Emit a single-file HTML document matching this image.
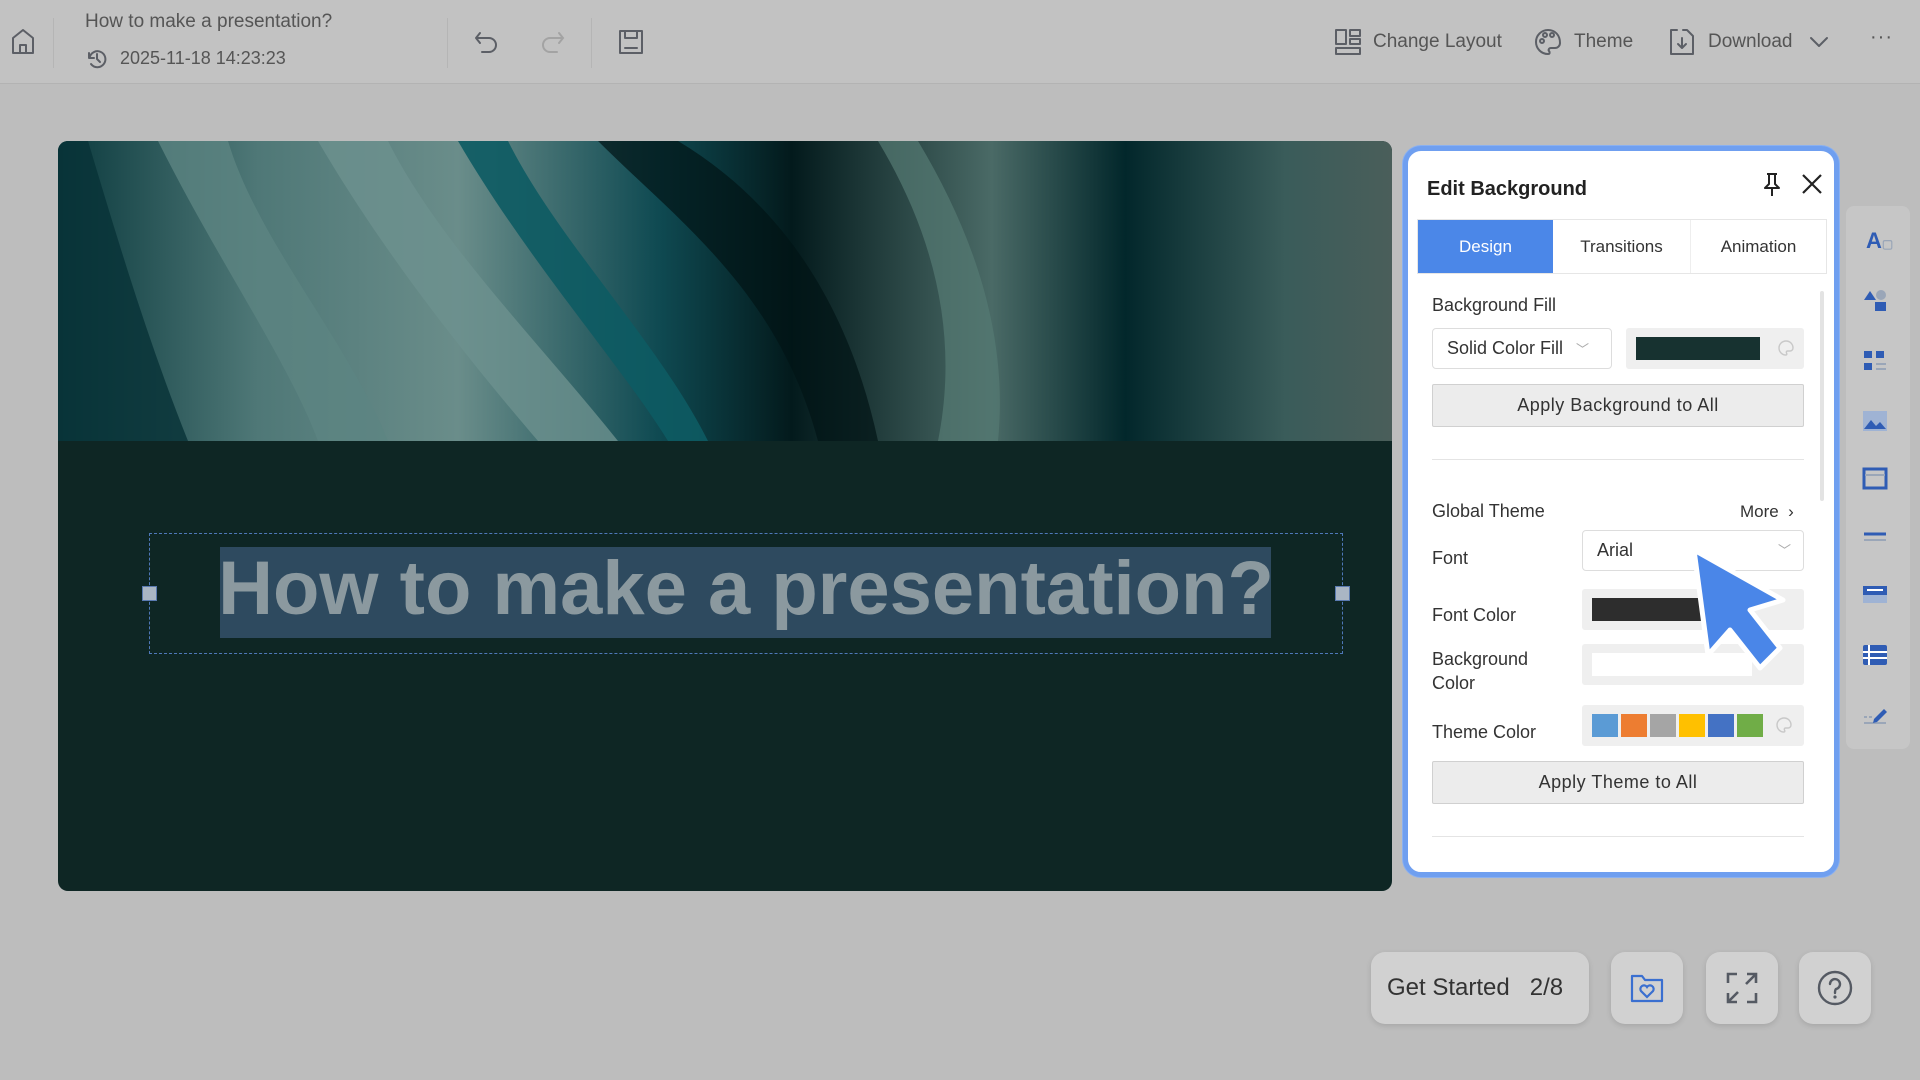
<!DOCTYPE html>
<html><head><meta charset="utf-8"><style>
*{box-sizing:border-box;margin:0;padding:0}
body{width:1920px;height:1080px;background:#bdbdbd;font-family:"Liberation Sans","DejaVu Sans",sans-serif;position:relative;overflow:hidden;color:#333}
.a{position:absolute}
.top{left:0;top:0;width:1920px;height:84px;background:#c2c2c2;border-bottom:1px solid #b3b3b3}
.vd{width:1px;background:#b5b5b5;top:18px;height:50px}
.ttxt{font-size:19px;color:#555}
.ic{stroke:#5c5f66;fill:none;stroke-width:2;stroke-linecap:round;stroke-linejoin:round}
.p{font-size:18px;color:#333}
.btn{background:#ececec;border:1px solid #d0d0d0;text-align:center;font-size:18px;color:#333;letter-spacing:.5px;border-radius:2px}
.sw{background:#efefef;border-radius:3px}
.tb svg{position:absolute;left:16px}
.bb{background:#d1d1d1;border-radius:14px;box-shadow:0 2px 6px rgba(0,0,0,.12)}
.pal{position:absolute;top:11px}
</style></head><body>
<div class="a top"></div>
<svg class="a" style="left:8px;top:26px" width="30" height="30" viewBox="0 0 30 30"><path class="ic" d="M5 27V12L15 4l10 8v15z M12 27v-8h6v8"/></svg>
<div class="a vd" style="left:53px"></div>
<div class="a ttxt" style="left:85px;top:11px">How to make a presentation?</div>
<svg class="a" style="left:85px;top:47px" width="24" height="24" viewBox="0 0 24 24"><path class="ic" d="M4 6v5h5 M4.5 11A8 8 0 1 1 6 17 M12 7v5l3 3"/></svg>
<div class="a ttxt" style="left:120px;top:48px;font-size:18px">2025-11-18 14:23:23</div>
<div class="a vd" style="left:447px"></div>
<svg class="a" style="left:471px;top:26px" width="32" height="32" viewBox="0 0 32 32"><path class="ic" d="M9 7L5 12l4 5 M5 12h13a7 7 0 0 1 0 14h-7"/></svg>
<svg class="a" style="left:536px;top:26px" width="32" height="32" viewBox="0 0 32 32"><path d="M23 7l4 5-4 5 M27 12H14a7 7 0 0 0 0 14h7" fill="none" stroke="#a3a3a3" stroke-width="2" stroke-linecap="round"/></svg>
<div class="a vd" style="left:591px"></div>
<svg class="a" style="left:615px;top:26px" width="32" height="32" viewBox="0 0 32 32"><path class="ic" d="M5 5h22v22H5z M10 5v7h12V5 M10 22h12"/></svg>
<svg class="a" style="left:1333px;top:27px" width="30" height="30" viewBox="0 0 30 30"><path class="ic" d="M3 3h10v14H3z M17 3h10v6H17z M17 12h10v5H17z M3 21h24v6H3z"/></svg>
<div class="a ttxt" style="left:1373px;top:31px">Change Layout</div>
<svg class="a" style="left:1533px;top:27px" width="30" height="30" viewBox="0 0 30 30"><path class="ic" d="M15 3a12 12 0 1 0 0 24c2 0 2-2 1-3s0-3 2-3h4a5 5 0 0 0 5-5C27 8 22 3 15 3z"/><circle cx="9" cy="14" r="2" class="ic"/><circle cx="12" cy="8" r="2" class="ic"/><circle cx="19" cy="8" r="2" class="ic"/></svg>
<div class="a ttxt" style="left:1574px;top:31px">Theme</div>
<svg class="a" style="left:1667px;top:27px" width="30" height="30" viewBox="0 0 30 30"><path class="ic" d="M10 3H4v24h22V9l-6-6h-4 M15 11v10 M11 17l4 4 4-4"/></svg>
<div class="a ttxt" style="left:1708px;top:31px">Download</div>
<svg class="a" style="left:1808px;top:32px" width="22" height="20" viewBox="0 0 22 20"><path class="ic" d="M3 6l8 8 8-8"/></svg>
<div class="a ttxt" style="left:1870px;top:26px;font-size:20px;letter-spacing:1px">···</div>

<!-- slide -->
<div class="a" style="left:58px;top:141px;width:1334px;height:750px;border-radius:10px;background:#0e2624;overflow:hidden">
<svg width="1334" height="300" viewBox="0 0 1334 300" style="display:block">
<defs>
<linearGradient id="g1" x1="0" x2="1"><stop offset="0" stop-color="#0b3a3e"/><stop offset=".15" stop-color="#4f7877"/><stop offset=".3" stop-color="#6a8d8a"/><stop offset=".45" stop-color="#0f4a52"/><stop offset=".55" stop-color="#031a1c"/><stop offset=".7" stop-color="#4a6a66"/><stop offset=".8" stop-color="#02272b"/><stop offset=".92" stop-color="#3a5c5a"/><stop offset="1" stop-color="#4a5e5a"/></linearGradient>
</defs>
<rect width="1334" height="300" fill="url(#g1)"/>
<path d="M100 0C160 120 230 220 260 300H330C290 200 200 100 170 0z" fill="#5d8482" opacity=".8"/>
<path d="M260 0C330 120 420 230 480 300H560C480 200 380 100 330 0z" fill="#6d918e" opacity=".8"/>
<path d="M400 0C470 120 560 220 610 300H650C600 200 500 100 450 0z" fill="#0d5b63" opacity=".9"/>
<path d="M0 0V300H130C90 200 60 100 30 0z" fill="#083237" opacity=".8"/>
<path d="M820 0C880 100 900 200 880 300H940C950 200 920 100 860 0z" fill="#567a74" opacity=".7"/>
<path d="M540 0C620 80 720 150 760 300H820C790 160 720 60 620 0z" fill="#011416" opacity=".7"/>
</svg>
<div class="a" style="left:91px;top:392px;width:1194px;height:121px;border:1px dashed #4e78b8"></div>
<div class="a" style="left:162px;top:406px;width:1051px;height:91px;background:#2e4a5f"></div>
<div class="a" style="left:91px;top:398px;width:1194px;text-align:center;font:bold 76px 'Liberation Sans',sans-serif;color:#8b999f;line-height:100px">How to make a presentation?</div>
<div class="a" style="left:84px;top:445px;width:15px;height:15px;background:#aab6c4;border:1px solid #5a7ab0"></div>
<div class="a" style="left:1277px;top:445px;width:15px;height:15px;background:#aab6c4;border:1px solid #5a7ab0"></div>
</div>

<!-- right toolbar -->
<div class="a tb" style="left:1846px;top:206px;width:64px;height:543px;background:#c6c6c6;border-radius:8px">
<div class="a" style="left:20px;top:22px;font:bold 22px 'Liberation Sans';color:#2f5cb4">A<span style="font-size:12px;color:#9aa6b8">▢</span></div>
<svg style="top:82px" width="26" height="26" viewBox="0 0 26 26"><path d="M2 12L8 3l6 9z" fill="#2f5cb4"/><rect x="13" y="14" width="11" height="9" fill="#2f5cb4"/><circle cx="19" cy="7" r="5" fill="#9aa6b8"/></svg>
<svg style="top:142px" width="26" height="26" viewBox="0 0 26 26"><rect x="2" y="3" width="8" height="7" fill="#2f5cb4"/><rect x="14" y="3" width="8" height="7" fill="#2f5cb4"/><rect x="2" y="15" width="8" height="7" fill="#2f5cb4"/><path d="M14 16h10M14 21h10" stroke="#9aa6b8" stroke-width="2"/></svg>
<svg style="top:203px" width="26" height="24" viewBox="0 0 26 24"><rect x="1" y="2" width="24" height="20" fill="#9fb3d4"/><path d="M2 20l7-9 5 6 4-4 6 7z" fill="#2f5cb4"/></svg>
<svg style="top:261px" width="26" height="24" viewBox="0 0 26 24"><rect x="2" y="2" width="22" height="19" fill="none" stroke="#2f5cb4" stroke-width="3"/><path d="M3 8h20" stroke="#9aa6b8" stroke-width="2"/></svg>
<svg style="top:318px" width="26" height="24" viewBox="0 0 26 24"><path d="M2 10h22" stroke="#2f5cb4" stroke-width="3"/><path d="M2 16h22" stroke="#9aa6b8" stroke-width="2"/></svg>
<svg style="top:377px" width="26" height="24" viewBox="0 0 26 24"><rect x="1" y="3" width="24" height="9" fill="#2f5cb4"/><rect x="1" y="12" width="24" height="8" fill="#9fb3d4"/><path d="M5 7h16" stroke="#fff" stroke-width="2"/></svg>
<svg style="top:437px" width="26" height="24" viewBox="0 0 26 24"><rect x="1" y="2" width="24" height="20" rx="2" fill="#2f5cb4"/><path d="M7 2v20M1 9h24M1 15h24" stroke="#fff" stroke-width="2"/></svg>
<svg style="top:497px" width="26" height="24" viewBox="0 0 26 24"><path d="M2 14h10" stroke="#9aa6b8" stroke-width="2" stroke-dasharray="3 2"/><path d="M2 20h22" stroke="#9aa6b8" stroke-width="2"/><path d="M12 16l10-10 3 3-10 10-4 1z" fill="#2f5cb4"/></svg>
</div>

<!-- panel -->
<div class="a" style="left:1403px;top:146px;width:436px;height:731px;background:#fff;border:5px solid #6f9ff0;border-radius:18px;box-shadow:0 0 0 1px #8ab0f0">
<div class="a" style="left:19px;top:27px;font-size:20px;font-weight:bold;color:#222">Edit Background</div>
<svg class="a" style="left:353px;top:20px" width="22" height="28" viewBox="0 0 22 28"><path d="M6 3h10M8 3v10l-4 4h14l-4-4V3M11 17v8" fill="none" stroke="#222" stroke-width="2" stroke-linejoin="round"/></svg>
<svg class="a" style="left:392px;top:21px" width="24" height="24" viewBox="0 0 24 24"><path d="M3 3l18 18M21 3L3 21" stroke="#222" stroke-width="2.2"/></svg>
<div class="a" style="left:9px;top:68px;width:410px;height:55px;border:1px solid #e6e6e6;display:flex;font-size:17px;color:#333">
<div style="width:135px;background:#4b87e8;color:#fff;text-align:center;line-height:53px">Design</div>
<div style="width:138px;text-align:center;line-height:53px;border-right:1px solid #eee">Transitions</div>
<div style="flex:1;text-align:center;line-height:53px">Animation</div>
</div>
<div class="a" style="left:412px;top:140px;width:4px;height:210px;background:#e3e3e3;border-radius:2px"></div>
<div class="a p" style="left:24px;top:144px">Background Fill</div>
<div class="a" style="left:24px;top:177px;width:180px;height:41px;border:1px solid #ddd;border-radius:4px;font-size:18px;line-height:39px;padding-left:14px">Solid Color Fill <span style="color:#aaa;font-size:13px;margin-left:8px">﹀</span></div>
<div class="a sw" style="left:218px;top:177px;width:178px;height:41px"><div class="a" style="left:10px;top:9px;width:124px;height:23px;background:#173230"></div>
<svg class="pal" style="left:151px" width="18" height="18" viewBox="0 0 18 18"><path d="M9 2a7 7 0 1 0 0 14c1 0 1-1 .5-2s0-2 1-2h2.5A3 3 0 0 0 16 9C16 5 13 2 9 2z" fill="none" stroke="#c8c8c8" stroke-width="1.4"/></svg></div>
<div class="a btn" style="left:24px;top:233px;width:372px;height:43px;line-height:41px">Apply Background to All</div>
<div class="a" style="left:24px;top:308px;width:372px;height:1px;background:#e4e4e4"></div>
<div class="a p" style="left:24px;top:350px">Global Theme</div>
<div class="a" style="left:332px;top:351px;font-size:17px;color:#333">More &nbsp;›</div>
<div class="a p" style="left:24px;top:397px">Font</div>
<div class="a" style="left:174px;top:379px;width:222px;height:41px;border:1px solid #ddd;border-radius:4px;font-size:18px;line-height:39px;padding-left:14px">Arial<span class="a" style="right:12px;color:#aaa;font-size:13px">﹀</span></div>
<div class="a p" style="left:24px;top:454px">Font Color</div>
<div class="a sw" style="left:174px;top:438px;width:222px;height:41px"><div class="a" style="left:10px;top:9px;width:150px;height:23px;background:#2d2d2d"></div></div>
<div class="a p" style="left:24px;top:496px;line-height:24px">Background<br>Color</div>
<div class="a sw" style="left:174px;top:493px;width:222px;height:41px"><div class="a" style="left:10px;top:9px;width:160px;height:23px;background:#fff"></div></div>
<div class="a p" style="left:24px;top:571px">Theme Color</div>
<div class="a sw" style="left:174px;top:554px;width:222px;height:41px">
<div class="a" style="left:10px;top:9px;height:23px;display:flex;gap:3px"><i style="width:26px;background:#5b9bd5"></i><i style="width:26px;background:#ed7d31"></i><i style="width:26px;background:#a5a5a5"></i><i style="width:26px;background:#ffc000"></i><i style="width:26px;background:#4472c4"></i><i style="width:26px;background:#70ad47"></i></div>
<svg class="pal" style="left:193px" width="18" height="18" viewBox="0 0 18 18"><path d="M9 2a7 7 0 1 0 0 14c1 0 1-1 .5-2s0-2 1-2h2.5A3 3 0 0 0 16 9C16 5 13 2 9 2z" fill="none" stroke="#c8c8c8" stroke-width="1.4"/></svg></div>
<div class="a btn" style="left:24px;top:610px;width:372px;height:43px;line-height:41px">Apply Theme to All</div>
<div class="a" style="left:24px;top:685px;width:372px;height:1px;background:#e4e4e4"></div>
</div>
<!-- cursor -->
<svg class="a" style="left:1680px;top:540px" width="120" height="150" viewBox="0 0 120 150"><path d="M14 10L103 60 70 70 100 108 80 128 50 90 28 115z" fill="#4a86e8" stroke="#fff" stroke-width="5" stroke-linejoin="round"/></svg>

<!-- bottom buttons -->
<div class="a bb" style="left:1371px;top:952px;width:218px;height:72px;font-size:24px;line-height:72px;padding-left:16px;color:#333">Get Started &nbsp;&nbsp;2/8</div>
<div class="a bb" style="left:1611px;top:952px;width:72px;height:72px"><svg class="a" style="left:18px;top:18px" width="36" height="36" viewBox="0 0 36 36"><path d="M3 6h10l3 4h17v21H3z" fill="none" stroke="#3a6fd0" stroke-width="2.2" stroke-linejoin="round"/><path d="M18 27l-6-6a3.5 3.5 0 0 1 6-4 3.5 3.5 0 0 1 6 4z" fill="none" stroke="#3a6fd0" stroke-width="2.2"/></svg></div>
<div class="a bb" style="left:1706px;top:952px;width:72px;height:72px"><svg class="a" style="left:18px;top:18px" width="36" height="36" viewBox="0 0 36 36"><path d="M4 13V4h9 M23 32h9v-9 M4 23v9h9 M23 4h9v9 M32 4l-10 10 M4 32l10-10" fill="none" stroke="#555a63" stroke-width="2.6"/></svg></div>
<div class="a bb" style="left:1799px;top:952px;width:72px;height:72px"><svg class="a" style="left:17px;top:17px" width="38" height="38" viewBox="0 0 38 38"><circle cx="19" cy="19" r="16" fill="none" stroke="#555a63" stroke-width="2.4"/><path d="M14 15a5 5 0 1 1 6 5c-1 1-1 2-1 4" fill="none" stroke="#555a63" stroke-width="2.4" stroke-linecap="round"/><circle cx="19" cy="28" r="1.6" fill="#555a63"/></svg></div>
</body></html>
